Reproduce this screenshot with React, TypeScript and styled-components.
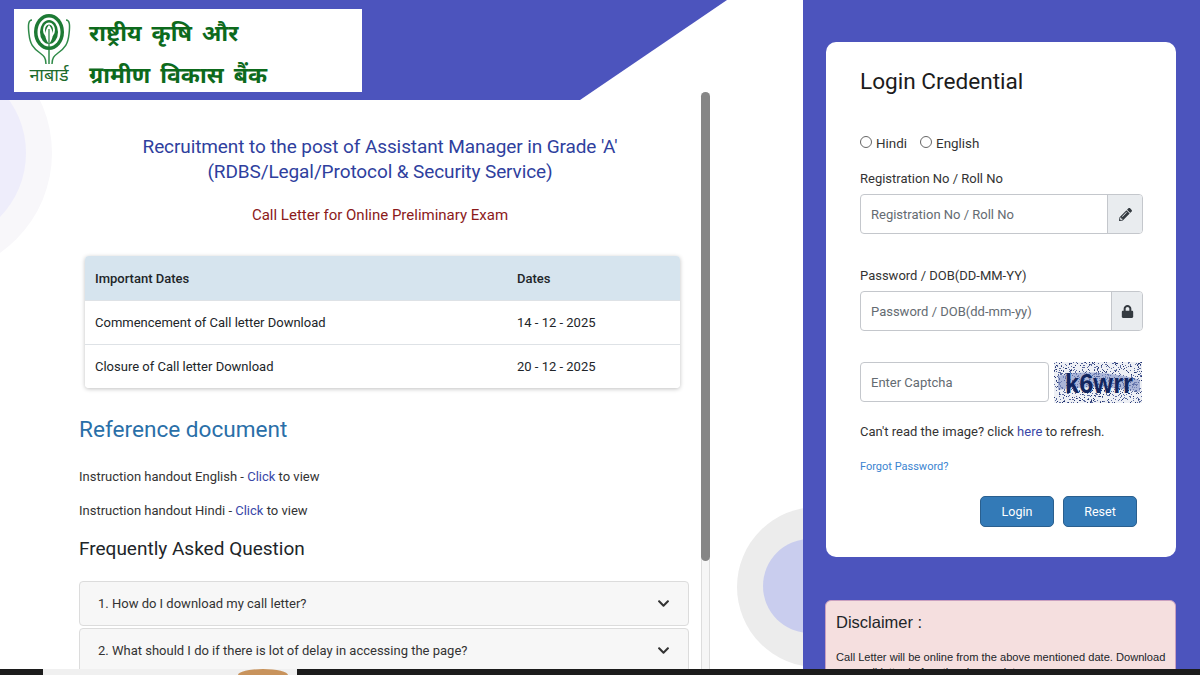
import React from 'react'
import styled, { createGlobalStyle } from 'styled-components'
import { FaChevronDown, FaLock, FaPencilAlt } from 'react-icons/fa'

const GlobalStyle = createGlobalStyle`
  html, body {
    margin: 0;
    padding: 0;
    background: #fff;
  }
  body {
    font-family: Roboto, "Liberation Sans", sans-serif;
    color: #212529;
  }
  * {
    box-sizing: border-box;
  }
`

const Page = styled.div`
  width: 1200px;
  height: 675px;
  overflow: hidden;
  display: flex;
  flex-direction: column;
`

const Main = styled.div`
  height: 669px;
  display: grid;
  grid-template-columns: 803px 397px;
  overflow: hidden;
`

const LeftColumn = styled.div`
  position: relative;
  overflow: hidden;
  background: #fff;
`

const Ring = styled.div<{ $size: number; $left: number; $top: number; $color: string }>`
  position: absolute;
  width: ${({ $size }) => $size}px;
  height: ${({ $size }) => $size}px;
  left: ${({ $left }) => $left}px;
  top: ${({ $top }) => $top}px;
  border-radius: 50%;
  background: ${({ $color }) => $color};
`

const HeaderBand = styled.div`
  position: relative;
  height: 100px;
  padding: 9px 0 0 14px;
  background: #4c54bd;
  clip-path: polygon(0 0, 727px 0, 580px 100px, 0 100px);
`

const LogoBox = styled.div`
  width: 348px;
  height: 83px;
  background: #fff;
  display: flex;
  align-items: center;
  padding-left: 12px;
  gap: 17px;
`

const Emblem = styled.div`
  width: 46px;
  margin-top: -6px;
  display: flex;
  flex-direction: column;
  align-items: center;
  color: #1d6b2c;
  font-size: 18px;
  line-height: 20px;
  font-family: "Noto Sans", sans-serif;
`

const LogoText = styled.div`
  margin-top: 5px;
  color: #0d6a1c;
  font-family: "Noto Sans", sans-serif;
  font-weight: 700;
  font-size: 23px;
  line-height: 42px;
  word-spacing: 4px;
`

const Body = styled.div`
  position: relative;
  width: 610px;
  margin-left: 79px;
  padding-top: 34px;
`

const Intro = styled.div`
  width: 602px;
  text-align: center;
`

const Title = styled.h1`
  margin: 0;
  font-size: 19px;
  letter-spacing: -0.1px;
  line-height: 25px;
  font-weight: 400;
  color: #2f3f9e;
`

const Subtitle = styled.h2`
  margin: 19px 0 0;
  font-size: 15px;
  line-height: 24px;
  font-weight: 400;
  color: #8b1a1a;
`

const DatesTable = styled.div`
  width: 595px;
  margin: 29px 0 0 6px;
  border-radius: 4px;
  overflow: hidden;
  box-shadow: 0 1px 4px rgba(0, 0, 0, 0.25);
`

const DateRow = styled.div<{ $head?: boolean }>`
  height: ${({ $head }) => ($head ? 45 : 44)}px;
  display: grid;
  grid-template-columns: 422px 1fr;
  align-items: center;
  padding-left: 10px;
  font-size: 13px;
  font-weight: ${({ $head }) => ($head ? 500 : 400)};
  background: ${({ $head }) => ($head ? '#d6e4ee' : '#fff')};
  border-bottom: 1px solid #dee2e6;

  &:last-child {
    height: 43px;
    border-bottom: 0;
  }
`

const SectionTitle = styled.h3`
  margin: 26px 0 24px;
  font-size: 22.6px;
  line-height: 32px;
  font-weight: 400;
  color: #2a6fa8;
`

const InfoLine = styled.p`
  margin: 20px 0 0;
  font-size: 13px;
  line-height: 14px;
  color: #333;
`

const Link = styled.span`
  color: #3a47a8;
`

const FaqTitle = styled.h4`
  margin: 18px 0 0;
  font-size: 19px;
  line-height: 26px;
  font-weight: 400;
`

const FaqList = styled.div`
  margin-top: 19px;
  display: flex;
  flex-direction: column;
  gap: 2px;
`

const FaqItem = styled.div`
  height: 45px;
  border: 1px solid #dcdcdc;
  border-radius: 4px;
  background: #f7f7f7;
  display: flex;
  align-items: center;
  justify-content: space-between;
  padding: 0 18px;
  font-size: 13px;
  color: #333;
`

const ScrollTrack = styled.div`
  position: absolute;
  left: 701px;
  top: 92px;
  bottom: 0;
  width: 9px;
  background: #f6f6f6;
  border-left: 1px solid #ddd;
  border-right: 1px solid #ddd;
  border-radius: 5px 5px 0 0;
`

const ScrollThumb = styled.div`
  position: absolute;
  left: -1px;
  right: -1px;
  top: 0;
  height: 469px;
  border-radius: 5px;
  background: #868686;
`

const RightColumn = styled.div`
  background: #4c54bd;
  padding: 42px 24px 0 23px;
  position: relative;
`

const Card = styled.div`
  height: 515px;
  background: #fff;
  border-radius: 10px;
  padding: 24px 34px 0;
`

const CardTitle = styled.h2`
  margin: 0;
  font-size: 22.6px;
  line-height: 32px;
  font-weight: 400;
  color: #1c1c1c;
`

const RadioRow = styled.div`
  margin-top: 38px;
  display: flex;
  align-items: center;
  gap: 13px;
  font-size: 13.4px;
  color: #333;
`

const RadioLabel = styled.label`
  display: flex;
  align-items: center;
  gap: 4px;
`

const RadioMark = styled.span`
  width: 12px;
  height: 12px;
  border: 1px solid #666;
  border-radius: 50%;
  margin-top: -3px;
`

const FieldLabel = styled.div<{ $gap: number }>`
  margin-top: ${({ $gap }) => $gap}px;
  font-size: 13px;
  line-height: 17px;
  color: #333;
`

const InputGroup = styled.div`
  margin-top: 7px;
  height: 40px;
  width: 283px;
  display: flex;
  border: 1px solid #c4c7cc;
  border-radius: 4px;
  overflow: hidden;
`

const Placeholder = styled.div`
  flex: 1;
  display: flex;
  align-items: center;
  padding-left: 10px;
  font-size: 13px;
  color: #646b72;
`

const Addon = styled.div<{ $width: number }>`
  width: ${({ $width }) => $width}px;
  background: #e9ecef;
  border-left: 1px solid #c4c7cc;
  display: flex;
  align-items: center;
  justify-content: center;
  font-size: 13px;
  color: #343a40;
`

const CaptchaRow = styled.div`
  margin-top: 31px;
  display: flex;
  gap: 5px;
`

const CaptchaInput = styled.div`
  width: 189px;
  height: 40px;
  border: 1px solid #c4c7cc;
  border-radius: 4px;
  display: flex;
  align-items: center;
  padding-left: 10px;
  font-size: 13px;
  color: #646b72;
`

const HelpLine = styled.p`
  margin: 20px 0 0;
  font-size: 13px;
  line-height: 17px;
  color: #333;
`

const ForgotLink = styled.div`
  margin-top: 20px;
  font-size: 11px;
  line-height: 14px;
  color: #3b84d0;
`

const ButtonRow = styled.div`
  margin-top: 22px;
  width: 277px;
  display: flex;
  justify-content: flex-end;
  gap: 9px;
`

const Button = styled.button`
  width: 74px;
  height: 31px;
  border: 1px solid #2a5f8e;
  border-radius: 5px;
  background: #337ab7;
  color: #fff;
  font: 400 12.5px Roboto, sans-serif;
`

const Disclaimer = styled.div`
  margin-top: 43px;
  margin-left: -1px;
  height: 120px;
  background: #f5dfdf;
  border: 1px solid #c9a0c0;
  border-radius: 6px;
  padding: 9px 6px 9px 10px;
  font-family: "Liberation Sans", Arial, sans-serif;
`

const DisclaimerTitle = styled.h3`
  margin: 0;
  font-size: 16.5px;
  line-height: 24px;
  font-weight: 400;
`

const DisclaimerText = styled.p`
  margin: 16px 0 0;
  font-size: 11.1px;
  line-height: 15px;
`

const Taskbar = styled.div`
  height: 6px;
  background: #1c1c1c;
  display: flex;
  padding-left: 43px;
`

const TaskbarWindow = styled.div`
  width: 254px;
  background: #f0f0f0;
  display: flex;
  justify-content: flex-end;
  padding-right: 9px;
`

const Seal = styled.div`
  width: 50px;
  height: 6px;
  border-radius: 50% 50% 0 0 / 100% 100% 0 0;
  background: #c8935c;
`

function NabardEmblem() {
  return (
    <svg width="46" height="52" viewBox="0 0 46 52">
      <ellipse cx="23" cy="20" rx="15" ry="18" fill="#1d7a34" />
      <ellipse cx="23" cy="20" rx="11.5" ry="14.5" fill="#fff" />
      <ellipse cx="23" cy="20" rx="9" ry="12" fill="#1d7a34" />
      <ellipse cx="23" cy="18" rx="6" ry="7.5" fill="#fff" />
      <ellipse cx="23" cy="18" rx="4" ry="5.5" fill="#1d7a34" />
      <path d="M23 13 C28 19 28 26 23 32 C18 26 18 19 23 13Z" fill="#fff" />
      <path d="M23 17 L23 36" stroke="#1d7a34" strokeWidth="1.2" />
      <path
        d="M6 8 C2 8 2 14 3 22 C4 32 7 36 14 41 C18 44 20 46 20 52 M40 8 C44 8 44 14 43 22 C42 32 39 36 32 41 C28 44 26 46 26 52"
        fill="none"
        stroke="#2f8a48"
        strokeWidth="1.5"
      />
      <path d="M23 38 L23 52" stroke="#2f8a48" strokeWidth="1.5" />
    </svg>
  )
}

// noise dots are seeded so each render gives the same picture
function Captcha() {
  const dots: React.ReactElement[] = []
  let seed = 7
  for (let i = 0; i < 800; i++) {
    seed = (seed * 16807) % 2147483647
    const x = seed % 88
    seed = (seed * 16807) % 2147483647
    const y = seed % 41
    dots.push(<rect key={i} x={x} y={y} width="1" height="1" fill={i % 3 ? '#5b6a9e' : '#23346f'} />)
  }
  return (
    <svg width="88" height="41" viewBox="0 0 88 41">
      <rect width="88" height="41" fill="#eef0f5" />
      {dots}
      <path d="M4 14 C24 8 60 10 86 18 L86 30 C60 24 28 24 4 28Z" fill="#7f90c4" opacity="0.6" />
      <text
        x="11"
        y="31"
        fontFamily="Liberation Sans, sans-serif"
        fontWeight="700"
        fontSize="28"
        fill="#12265f"
        textLength="68"
        lengthAdjust="spacingAndGlyphs"
      >
        k6wrr
      </text>
    </svg>
  )
}

export default function App() {
  return (
    <Page>
      <GlobalStyle />
      <Main>
        <LeftColumn>
          <Ring $size={244} $left={-192} $top={31} $color="#f8f7fa" />
          <Ring $size={184} $left={-158} $top={61} $color="#eeedfb" />
          <Ring $size={160} $left={737} $top={507} $color="#ececec" />
          <Ring $size={94} $left={763} $top={539} $color="#c9cdee" />
          <HeaderBand>
            <LogoBox>
              <Emblem>
                <NabardEmblem />
                नाबार्ड
              </Emblem>
              <LogoText>
                राष्ट्रीय कृषि और
                <br />
                ग्रामीण विकास बैंक
              </LogoText>
            </LogoBox>
          </HeaderBand>
          <Body>
            <Intro>
              <Title>
                Recruitment to the post of Assistant Manager in Grade 'A'
                <br />
                (RDBS/Legal/Protocol &amp; Security Service)
              </Title>
              <Subtitle>Call Letter for Online Preliminary Exam</Subtitle>
            </Intro>
            <DatesTable>
              <DateRow $head>
                <span>Important Dates</span>
                <span>Dates</span>
              </DateRow>
              <DateRow>
                <span>Commencement of Call letter Download</span>
                <span>14 - 12 - 2025</span>
              </DateRow>
              <DateRow>
                <span>Closure of Call letter Download</span>
                <span>20 - 12 - 2025</span>
              </DateRow>
            </DatesTable>
            <SectionTitle>Reference document</SectionTitle>
            <InfoLine>
              Instruction handout English - <Link>Click</Link> to view
            </InfoLine>
            <InfoLine>
              Instruction handout Hindi - <Link>Click</Link> to view
            </InfoLine>
            <FaqTitle>Frequently Asked Question</FaqTitle>
            <FaqList>
              <FaqItem>
                1. How do I download my call letter?
                <FaChevronDown size={13} />
              </FaqItem>
              <FaqItem>
                2. What should I do if there is lot of delay in accessing the page?
                <FaChevronDown size={13} />
              </FaqItem>
            </FaqList>
          </Body>
          <ScrollTrack>
            <ScrollThumb />
          </ScrollTrack>
        </LeftColumn>
        <RightColumn>
          <Card>
            <CardTitle>Login Credential</CardTitle>
            <RadioRow>
              <RadioLabel>
                <RadioMark />
                Hindi
              </RadioLabel>
              <RadioLabel>
                <RadioMark />
                English
              </RadioLabel>
            </RadioRow>
            <FieldLabel $gap={19}>Registration No / Roll No</FieldLabel>
            <InputGroup>
              <Placeholder>Registration No / Roll No</Placeholder>
              <Addon $width={35}>
                <FaPencilAlt />
              </Addon>
            </InputGroup>
            <FieldLabel $gap={33}>Password / DOB(DD-MM-YY)</FieldLabel>
            <InputGroup>
              <Placeholder>Password / DOB(dd-mm-yy)</Placeholder>
              <Addon $width={31}>
                <FaLock />
              </Addon>
            </InputGroup>
            <CaptchaRow>
              <CaptchaInput>Enter Captcha</CaptchaInput>
              <Captcha />
            </CaptchaRow>
            <HelpLine>
              Can't read the image? click <Link>here</Link> to refresh.
            </HelpLine>
            <ForgotLink>Forgot Password?</ForgotLink>
            <ButtonRow>
              <Button>Login</Button>
              <Button>Reset</Button>
            </ButtonRow>
          </Card>
          <Disclaimer>
            <DisclaimerTitle>Disclaimer :</DisclaimerTitle>
            <DisclaimerText>
              Call Letter will be online from the above mentioned date. Download your call letter before the closure date.
            </DisclaimerText>
          </Disclaimer>
        </RightColumn>
      </Main>
      <Taskbar>
        <TaskbarWindow>
          <Seal />
        </TaskbarWindow>
      </Taskbar>
    </Page>
  )
}
